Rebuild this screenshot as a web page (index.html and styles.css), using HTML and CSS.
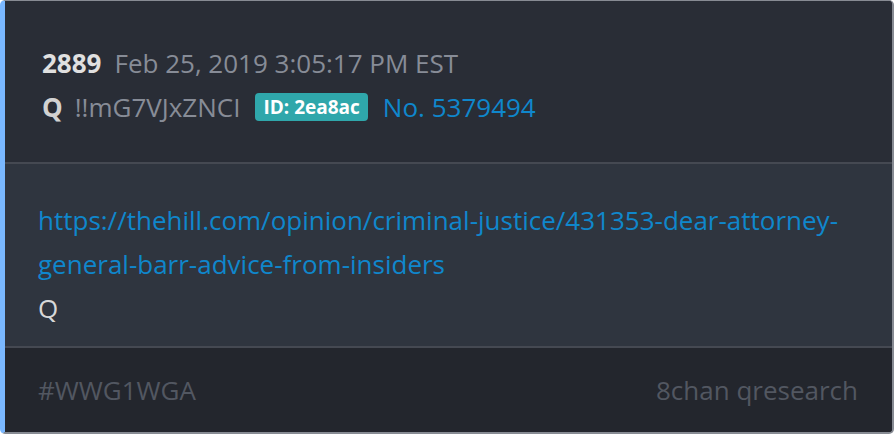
FILE: index.html
```html
<!DOCTYPE html>
<html>
<head>
<meta charset="utf-8">
<link rel="stylesheet" href="styles.css">
</head>
<body>
<div class="card">
  <div class="header">
    <div class="line"><span class="num">2889</span><span class="date">Feb 25, 2019 3:05:17 PM EST</span></div>
    <div class="line"><span class="name">Q</span><span class="trip">!!mG7VJxZNCI</span><span class="badge">ID: 2ea8ac</span><span class="postno">No. 5379494</span></div>
  </div>
  <div class="body">
    <a class="link" href="#">https://thehill.com/opinion/criminal-justice/431353-dear-attorney-general-barr-advice-from-insiders</a>
    <div class="sig">Q</div>
  </div>
  <div class="footer">
    <span>#WWG1WGA</span>
    <span>8chan qresearch</span>
  </div>
</div>
</body>
</html>
```
FILE: styles.css
```css
html, body { margin: 0; padding: 0; background: #ffffff; }
body { font-family: "Open Sans", sans-serif; font-size: 26px; }
.card {
  width: 894px; height: 434px; box-sizing: border-box;
  border: 1px solid #878b93; border-right-width: 2px; border-bottom-width: 2px;
  border-left: 5px solid #7ab8ff;
  border-radius: 5px; overflow: hidden;
  display: flex; flex-direction: column;
  background: #292d36;
}
.header {
  background: #292d36; padding: 40px 30px 0 37px; height: 163px; box-sizing: border-box;
  border-bottom: 2px solid #454952;
}
.line { line-height: 44px; display: flex; align-items: center; white-space: nowrap; }
.num { font-weight: 700; color: #e0e0e0; margin-right: 13px; }
.date { color: #878c97; }
.name { font-weight: 700; color: #d2d2d2; margin-right: 12px; }
.trip { color: #878c97; margin-right: 15px; }
.badge {
  background: #2fa7ab; color: #ffffff; font-weight: 700; font-size: 19px;
  line-height: 28px; padding: 0 8px; border-radius: 4px; margin-right: 15px;
}
.postno { color: #0f87cc; }
.body {
  background: #2f353f; height: 184px; box-sizing: border-box;
  padding: 34px 40px 0 33px; line-height: 44px;
  border-bottom: 2px solid #454952;
}
.link { color: #0f87cc; text-decoration: none; }
.sig { color: #d8d8d8; line-height: 44px; }
.footer {
  flex: 1; background: #23262d; display: flex; justify-content: space-between; align-items: center;
  padding: 0 34px 0 33px; color: #525761;
}
```
